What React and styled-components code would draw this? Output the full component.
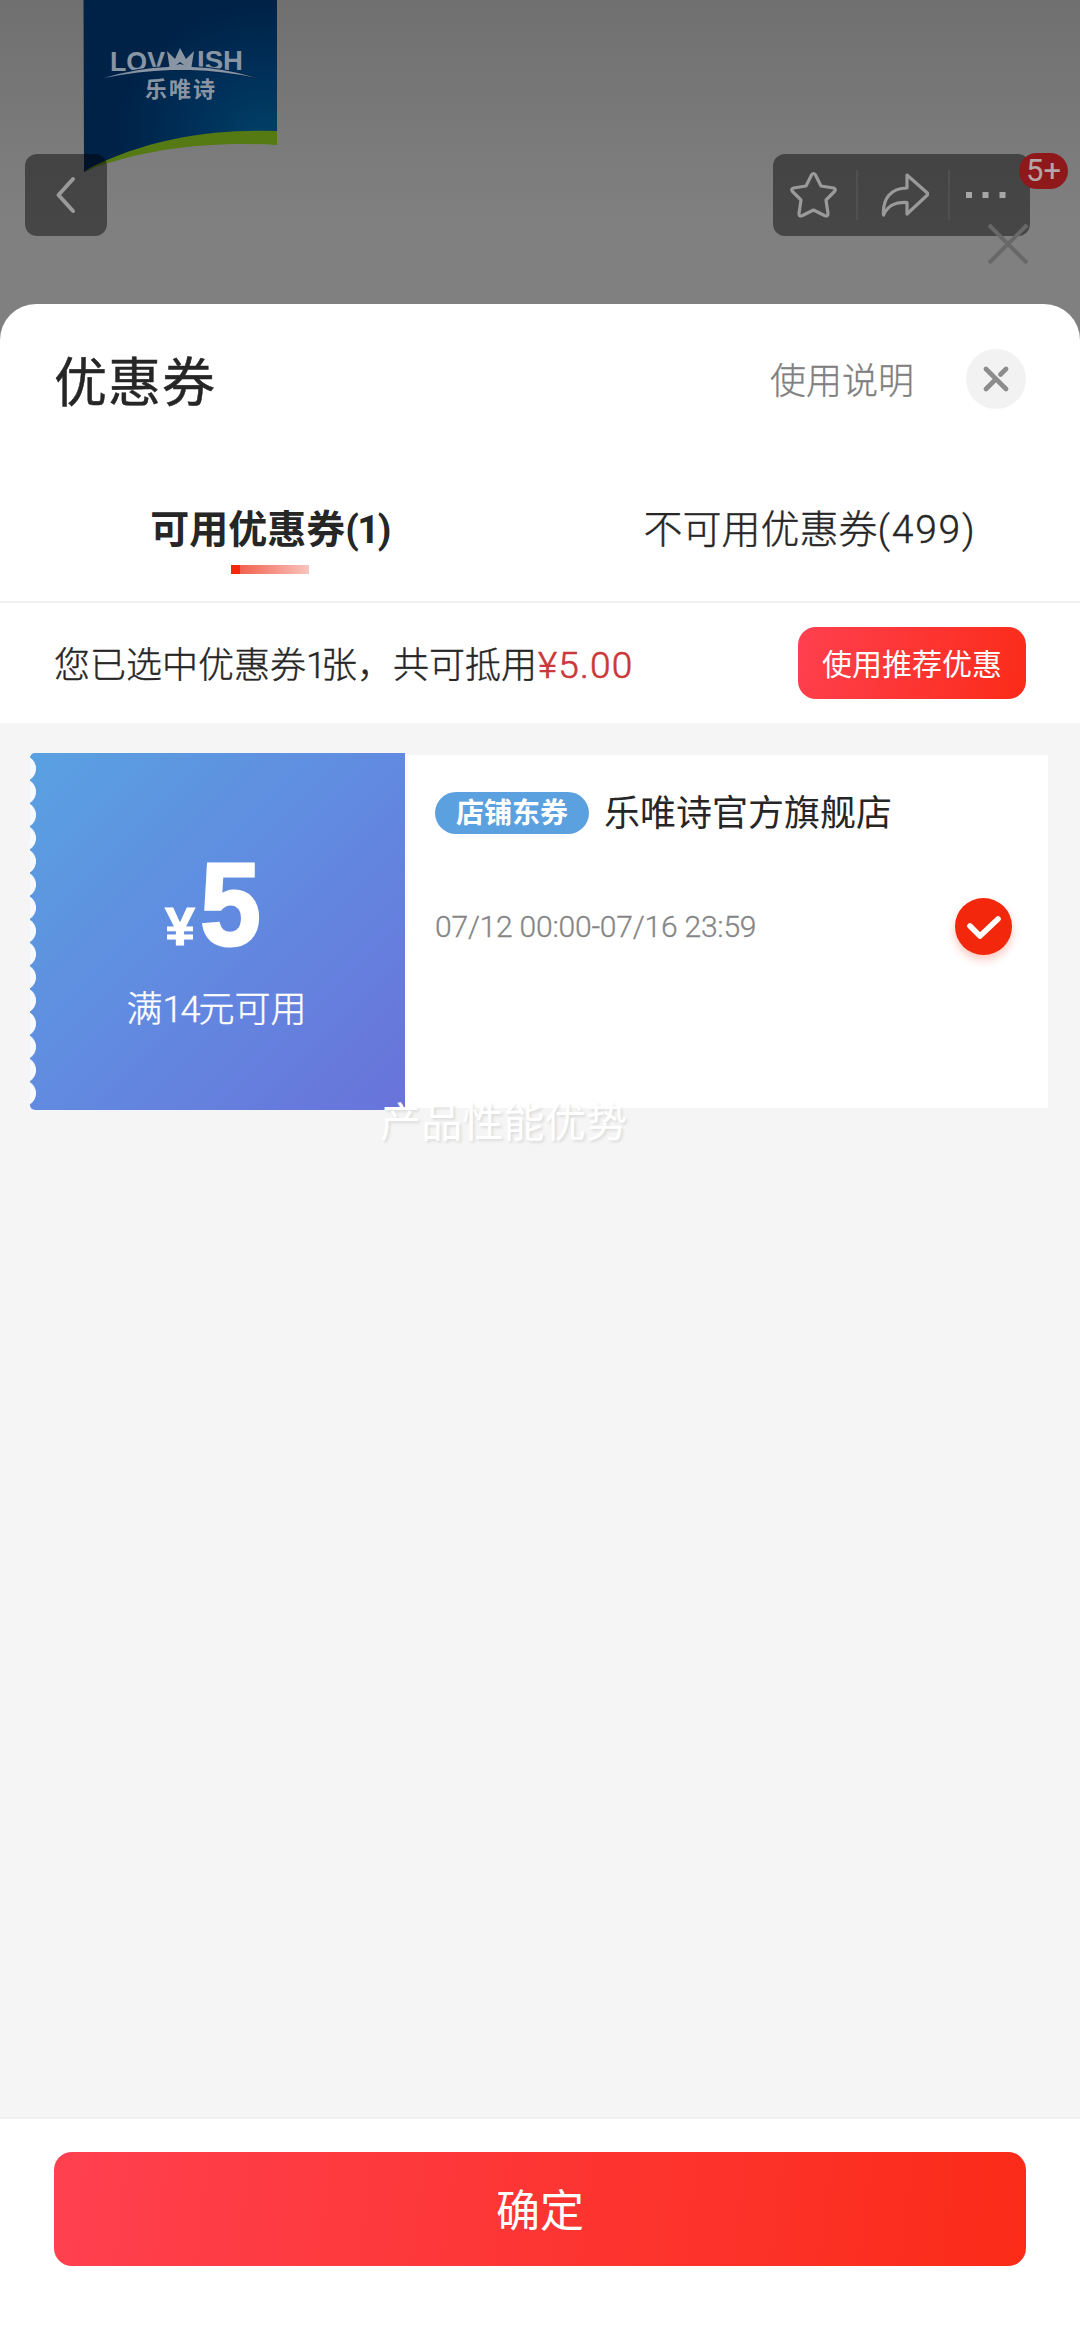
import React from 'react';
import styled, { createGlobalStyle } from 'styled-components';

/**
 *  Styled Components
 */
const GlobalStyle = createGlobalStyle`
  * {
    box-sizing: border-box;
  }

  body {
    margin: 0;
    background: #808080;
    font-family: Roboto, 'Noto Sans CJK SC', sans-serif;
    color: #262626;
  }
`;

const Screen = styled.div`
  display: flex;
  flex-direction: column;
  position: relative;
  width: 1080px;
  height: 2344px;
  overflow: hidden;
  background: linear-gradient(#707070, #808080 220px);
`;

const Backdrop = styled.header`
  display: flex;
  justify-content: space-between;
  position: relative;
  height: 304px;
  flex: none;
  padding: 154px 50px 0 25px;
`;

const ProductPhoto = styled.svg`
  position: absolute;
  left: 83px;
  top: 0;
`;

const NavGroup = styled.div`
  display: flex;
  align-items: center;
  position: relative;
  width: ${props => props.$width}px;
  height: 82px;
  border-radius: 12px;
  background: rgba(0, 0, 0, 0.45);
`;

const NavItem = styled.div`
  display: flex;
  flex: ${props => props.$grow || 1};
  height: 50px;
  align-items: center;
  justify-content: center;

  & + & {
    border-left: solid 2px #505050;
  }
`;

const CountBadge = styled.span`
  position: absolute;
  left: 246px;
  top: -1px;
  width: 49px;
  height: 36px;
  border-radius: 18px;
  background: #8f181b;
  color: #b5a5a5;
  font-size: 31px;
  line-height: 36px;
  text-align: center;
`;

const PopupCross = styled.svg`
  position: absolute;
  left: 984px;
  top: 220px;
`;

const Sheet = styled.main`
  display: flex;
  flex-direction: column;
  flex: 1;
  border-radius: 36px 36px 0 0;
  background: #fff;
`;

const SheetHeader = styled.div`
  display: flex;
  align-items: center;
  height: 150px;
  padding: 0 54px;
`;

const SheetTitle = styled.h1`
  flex: 1;
  margin: 0 0 1px;
  font-size: 53px;
  font-weight: 400;
  letter-spacing: 1px;
  -webkit-text-stroke: 0.5px #262626;
`;

const HelpLink = styled.a`
  margin: 0 52px 2px 0;
  font-size: 36px;
  font-weight: 300;
  color: #808080;
  -webkit-text-stroke: 0.3px #808080;
`;

const CloseButton = styled.button`
  display: flex;
  align-items: center;
  justify-content: center;
  width: 60px;
  height: 60px;
  padding: 0;
  border: 0;
  border-radius: 50%;
  background: #f2f2f2;
`;

const Tabs = styled.nav`
  display: flex;
  height: 149px;
  border-bottom: solid 2px #f0f0f0;
`;

const Tab = styled.div`
  display: flex;
  flex: 1;
  flex-direction: column;
  align-items: center;
  padding-top: 47px;
  font-size: 39px;
  line-height: 58px;
  font-weight: ${props => (props.$active ? 700 : 300)};
  -webkit-text-stroke: ${props => (props.$active ? 0 : 0.4)}px #262626;
`;

const TabCount = styled.span`
  letter-spacing: ${props => props.$spacing}px;
`;

const TabMarker = styled.i`
  width: 78px;
  height: 9px;
  margin-top: 6px;
  background: linear-gradient(90deg, #f2270c 9px, #f2624f 9px, #f9c4be);
`;

const Summary = styled.div`
  display: flex;
  align-items: center;
  justify-content: space-between;
  height: 120px;
  padding: 0 54px;
  font-size: 36px;
`;

const SummaryText = styled.p`
  margin: 0 0 2px;
  font-weight: 300;
  -webkit-text-stroke: 0.4px currentColor;
`;

const TightDigits = styled.span`
  letter-spacing: ${props => props.$spacing}px;
`;

const Saving = styled.span`
  margin-left: 1px;
  color: #cb3639;
  font-size: 37px;
  letter-spacing: 1.2px;
  -webkit-text-stroke: 0.6px #cb3639;
`;

const RecommendButton = styled.button`
  width: 228px;
  height: 72px;
  padding: 0 0 3px;
  border: 0;
  border-radius: 18px;
  background: linear-gradient(105deg, #ff404f, #fb2b18);
  color: #fff;
  font-family: inherit;
  font-size: 30px;
`;

const CouponList = styled.section`
  flex: 1;
  padding: 30px 32px 0 30px;
  background: #f5f5f5;
`;

const Coupon = styled.article`
  display: flex;
  align-items: center;
  position: relative;
  height: 357px;
`;

const CouponValue = styled.div`
  display: flex;
  flex-direction: column;
  align-items: center;
  position: relative;
  width: 375px;
  height: 357px;
  padding-top: 89px;
  border-radius: 5px 0 0 5px;
  background: linear-gradient(135deg, #59a1e1, #6288e0 55%, #6973d9);
  color: #fff;

  /* perforated edge */
  &::before {
    content: '';
    position: absolute;
    left: 0;
    top: 4px;
    width: 7px;
    height: 348px;
    background: radial-gradient(circle at -7px 50%, #f6f9fd 12.6px, transparent 13.4px) 0 0 / 7px 23.2px;
  }
`;

const Amount = styled.div`
  display: flex;
  align-items: baseline;
  height: 126px;
  padding-right: 7px;
  font-family: 'Liberation Sans', sans-serif;
  font-weight: 700;
  font-size: 117px;
  line-height: 126px;
`;

const Currency = styled.span`
  margin-right: 3px;
  font-size: 54px;
  -webkit-text-stroke: 1px #fff;
`;

const Figure = styled.span`
  transform: scaleX(0.93);
  -webkit-text-stroke: 3px #fff;
`;

const Condition = styled.div`
  margin-top: 15px;
  padding-right: 2px;
  font-size: 36px;
  font-weight: 300;
  line-height: 54px;
  -webkit-text-stroke: 0.4px #fff;
`;

const CouponBody = styled.div`
  flex: 1;
  height: 353px;
  padding: 35px 36px 0 30px;
  background: #fff;
`;

const ShopRow = styled.div`
  display: flex;
  align-items: center;
  height: 46px;
`;

const ShopTag = styled.span`
  width: 154px;
  height: 42px;
  margin-right: 15px;
  border-radius: 21px;
  background: #5ba1e0;
  color: #fff;
  font-size: 28px;
  font-weight: 700;
  line-height: 43px;
  text-align: center;
`;

const ShopName = styled.span`
  margin-top: 2px;
  font-size: 36px;
  line-height: 46px;
`;

const ValidityRow = styled.div`
  display: flex;
  align-items: center;
  justify-content: space-between;
  margin-top: 62px;
`;

const Validity = styled.time`
  color: #858585;
  font-size: 30px;
  font-weight: 300;
  letter-spacing: -0.2px;
  -webkit-text-stroke: 0.3px #858585;
`;

const CheckMark = styled.span`
  display: flex;
  align-items: center;
  justify-content: center;
  width: 57px;
  height: 57px;
  border-radius: 50%;
  background: #f2270c;
  box-shadow: 0 5px 8px rgba(242, 39, 12, 0.25);
`;

const Toast = styled.div`
  position: absolute;
  left: 350px;
  top: 340px;
  color: #fff;
  font-size: 41px;
  line-height: 60px;
  letter-spacing: 0.2px;
  text-shadow: 2px 2px 3px rgba(0, 0, 0, 0.1);
`;

const Footer = styled.footer`
  height: 227px;
  padding: 33px 54px 0;
  border-top: solid 2px #f0f0f0;
`;

const ConfirmButton = styled.button`
  width: 100%;
  height: 114px;
  padding: 0 0 3px;
  border: 0;
  border-radius: 18px;
  background: linear-gradient(97deg, #ff404f, #fb2b18);
  color: #fff;
  font-family: inherit;
  font-size: 44px;
`;

const BrandPhoto = () => (
  <ProductPhoto width="200" height="174" viewBox="83 0 200 174">
    <defs>
      <radialGradient id="pack" cx="0.92" cy="0.78" r="0.75">
        <stop offset="0" stopColor="#003f66" />
        <stop offset="0.5" stopColor="#002f58" />
        <stop offset="1" stopColor="#002247" />
      </radialGradient>
    </defs>
    <path d="M83.500 0H277V134C205 128 145 142 84 172Z" fill="url(#pack)" />
    <path d="M277 131C220 129 150 136 84 171C145 149 205 141 277 145Z" fill="#557a13" />
    <g fill="#8a95a3" fontFamily="'Liberation Sans', sans-serif" fontWeight="700" fontSize="27">
      <text x="110" y="71" textLength="55" lengthAdjust="spacingAndGlyphs">LOV</text>
      <text x="197" y="70" textLength="46" lengthAdjust="spacingAndGlyphs">ISH</text>
    </g>
    {/* swoosh under the name, with the crown standing in for the W */}
    <path d="M104 78Q138 68 168 67L180 64L192 67Q224 68 257 78Q224 71 190 70H171Q138 71 104 78Z" fill="#8a95a3" stroke="#00264c" strokeWidth="2" paintOrder="stroke" />
    <path d="M167 51L175 59L180 48L186 59L194 51L191 70L180 62L170 70Z" fill="#8a95a3" />
    <text x="145" y="97" textLength="70" fill="#8a95a3" fontFamily="'Liberation Sans', 'Noto Sans CJK SC', sans-serif" fontWeight="700" fontSize="22">乐唯诗</text>
  </ProductPhoto>
);

const App = () => (
  <Screen>
    <GlobalStyle />
    <Backdrop>
      <BrandPhoto />
      <NavGroup $width={82}>
        <NavItem>
          <svg width="30" height="44" viewBox="0 0 30 44" fill="none" stroke="#9a9a9a" strokeWidth="4" strokeLinecap="round" strokeLinejoin="round">
            <path d="M22 6L7.500 22L22 38" />
          </svg>
        </NavItem>
      </NavGroup>
      <NavGroup $width={257}>
        <NavItem $grow={84}>
          <svg width="50" height="50" viewBox="0 0 50 50" fill="none" stroke="#9a9a9a" strokeWidth="3.200" strokeLinejoin="round">
            <path d="M22.500 5Q24.500 2 26.500 5L32 16L44.500 18Q47.500 19 45.500 21.500L37 30L39 43.500Q39 47 35.500 45.500L24.500 40L13.500 45.500Q10 47 10 43.500L12 30L3.500 21.500Q1.500 19 4.500 18L17 16Z" />
          </svg>
        </NavItem>
        <NavItem $grow={92}>
          <svg width="52" height="48" viewBox="-2.500 0 52 48" fill="none" stroke="#9a9a9a" strokeWidth="3.200" strokeLinejoin="round">
            <path d="M27.500 4L49 23L27.500 43V31.500C16 31 8.500 34 4 44C3 28 11 17 27.500 17Z" />
          </svg>
        </NavItem>
        <NavItem $grow={81}>
          <svg width="48" height="10" viewBox="1 0 48 10" fill="#a6a6a6">
            <path d="M1 2h6v6H1zM17.500 2h6v6h-6zM34.500 2h6v6h-6z" />
          </svg>
        </NavItem>
        <CountBadge>5+</CountBadge>
      </NavGroup>
      <PopupCross width="48" height="48" viewBox="0 0 48 48" fill="none" stroke="#686868" strokeWidth="4">
        <path d="M5 5L43 43M43 5L5 43" />
      </PopupCross>
    </Backdrop>

    <Sheet>
      <SheetHeader>
        <SheetTitle>优惠券</SheetTitle>
        <HelpLink>使用说明</HelpLink>
        <CloseButton>
          <svg width="26" height="26" viewBox="0 0 26 26" fill="none" stroke="#8c8c8c" strokeWidth="4.600" strokeLinecap="round">
            <path d="M3 3L23 23M23 3L17.500 8.500M13 13L3 23" />
          </svg>
        </CloseButton>
      </SheetHeader>

      <Tabs>
        <Tab $active>
          <div>可用优惠券<TabCount $spacing={-1.8}>(1)</TabCount></div>
          <TabMarker />
        </Tab>
        <Tab>
          <div>不可用优惠券<TabCount $spacing={1.8}>(499)</TabCount></div>
        </Tab>
      </Tabs>

      <Summary>
        <SummaryText>
          您已选中优惠券<TightDigits $spacing={-5}>1</TightDigits>张，共可抵用<Saving>¥5.00</Saving>
        </SummaryText>
        <RecommendButton>使用推荐优惠</RecommendButton>
      </Summary>

      <CouponList>
        <Coupon>
          <CouponValue>
            <Amount><Currency>¥</Currency><Figure>5</Figure></Amount>
            <Condition>满<TightDigits $spacing={-2}>14</TightDigits>元可用</Condition>
          </CouponValue>
          <CouponBody>
            <ShopRow>
              <ShopTag>店铺东券</ShopTag>
              <ShopName>乐唯诗官方旗舰店</ShopName>
            </ShopRow>
            <ValidityRow>
              <Validity>07/12 00:00-07/16 23:59</Validity>
              <CheckMark>
                <svg width="34" height="26" viewBox="0 0 34 26" fill="none" stroke="#fff" strokeWidth="5.600" strokeLinecap="round" strokeLinejoin="round">
                  <path d="M3 12L13 22L31 5" />
                </svg>
              </CheckMark>
            </ValidityRow>
          </CouponBody>
          <Toast>产品性能优势</Toast>
        </Coupon>
      </CouponList>

      <Footer>
        <ConfirmButton>确定</ConfirmButton>
      </Footer>
    </Sheet>
  </Screen>
);

export default App;
